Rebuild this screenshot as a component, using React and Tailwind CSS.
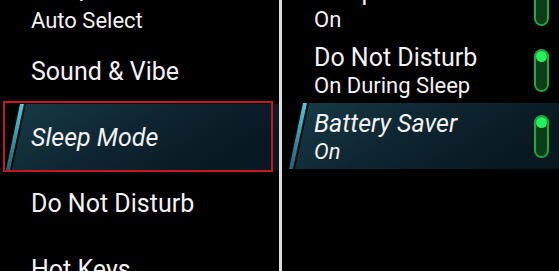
import React from 'react';

const leftItems = [
  { title: 'Sleep Timeout', sub: 'Auto Select', clipped: true },
  { title: 'Sound & Vibe' },
  { title: 'Sleep Mode', selected: true, focused: true },
  { title: 'Do Not Disturb' },
  { title: 'Hot Keys' },
];

const rightItems = [
  { title: 'Sleep Mode', sub: 'On', on: true },
  { title: 'Do Not Disturb', sub: 'On During Sleep', on: true },
  { title: 'Battery Saver', sub: 'On', on: true, selected: true },
];

function Highlight({ width }) {
  return (
    <svg className="absolute left-0 top-0" width={width} height="66" viewBox={`0 0 ${width} 66`}>
      <defs>
        <linearGradient id={`bg${width}`} x1="0" y1="0" x2="1" y2="0.4">
          <stop offset="0" stopColor="#163b46" />
          <stop offset="0.5" stopColor="#0e2631" />
          <stop offset="1" stopColor="#081820" />
        </linearGradient>
        <linearGradient id={`st${width}`} x1="0" y1="0" x2="0" y2="1">
          <stop offset="0" stopColor="#3fd0e4" />
          <stop offset="1" stopColor="#176577" />
        </linearGradient>
      </defs>
      <polygon points={`26,0 ${width},0 ${width},66 12,66`} fill={`url(#bg${width})`} />
      <polygon points="20,0 24,0 10,66 6,66" fill={`url(#st${width})`} />
    </svg>
  );
}

function Toggle({ on }) {
  return (
    <div className="relative h-[43px] w-[15px] rounded-full border-2 border-[#1fa83c] bg-[#0b3d17]">
      {on && <div className="absolute left-0 top-0 h-[11px] w-[11px] rounded-full bg-[#22f25c]" />}
    </div>
  );
}

function Row({ item, width, withToggle }) {
  return (
    <div className="relative flex h-[66px] shrink-0 items-center justify-between pl-[31px] pr-[10px]">
      {item.selected && <Highlight width={width} />}
      {item.focused && (
        <div className="pointer-events-none absolute left-[3px] right-[6px] top-[-3px] bottom-[-2px] border-2 border-[#c8161d]" />
      )}
      <div className={`relative flex flex-col pt-[2px] ${item.selected ? 'italic' : ''}`}>
        <span className={`text-[25px] leading-[28px] text-[#f2f2f2] ${item.clipped ? 'relative top-[-5px]' : ''}`}>
          {item.title}
        </span>
        {item.sub && <span className="text-[22px] leading-[27px] text-[#f2f2f2]">{item.sub}</span>}
      </div>
      {withToggle && (
        <div className="relative">
          <Toggle on={item.on} />
        </div>
      )}
    </div>
  );
}

export default function App() {
  return (
    <div className="flex h-[271px] w-[559px] overflow-hidden bg-black" style={{ fontFamily: 'Roboto, sans-serif' }}>
      <div className="flex w-[279px] shrink-0 flex-col mt-[-28px]">
        {leftItems.map((item, i) => (
          <Row key={i} item={item} width={279} />
        ))}
      </div>
      <div className="w-[3px] shrink-0 bg-[#dcdcdc]" />
      <div className="flex flex-1 flex-col mt-[-29px] pl-[1px]">
        {rightItems.map((item, i) => (
          <Row key={i} item={item} width={277} withToggle />
        ))}
      </div>
    </div>
  );
}
